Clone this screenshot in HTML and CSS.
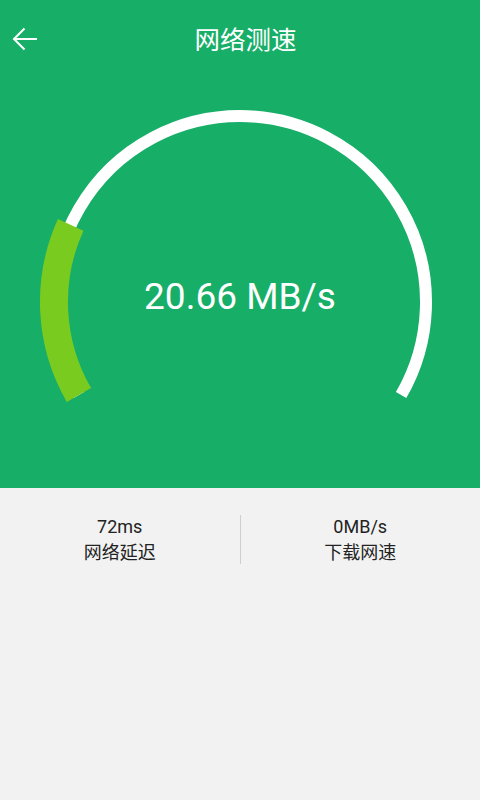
FILE: index.html
```html
<!DOCTYPE html>
<html lang="zh">
<head>
<meta charset="utf-8">
<link rel="stylesheet" href="styles.css">
</head>
<body>
<div class="app">
  <section class="top">
    <header class="bar">
      <svg class="back" width="26" height="26" viewBox="0 0 26 26">
        <path d="M25 13H2M12.5 2.5L2 13l10.5 10.5" fill="none" stroke="#fff" stroke-width="2"/>
      </svg>
      <h1 class="title">网络测速</h1>
    </header>
    <div class="gauge">
      <svg class="dial" width="480" height="408" viewBox="0 80 480 408">
        <path d="M78.9 395 A186 186 0 1 1 401.1 395" fill="none" stroke="#fff" stroke-width="12"/>
        <path d="M78.9 395 A186 186 0 0 1 70.7 224.9" fill="none" stroke="#7acb1f" stroke-width="28"/>
      </svg>
      <div class="speed">20.66 MB/s</div>
    </div>
  </section>
  <section class="stats">
    <div class="stat">
      <div class="val">72ms</div>
      <div class="lbl">网络延迟</div>
    </div>
    <div class="divider"></div>
    <div class="stat">
      <div class="val">0MB/s</div>
      <div class="lbl">下载网速</div>
    </div>
  </section>
</div>
</body>
</html>
```
FILE: styles.css
```css
html, body {
  margin: 0;
  padding: 0;
}
body {
  width: 480px;
  height: 800px;
  background: #f2f2f2;
  font-family: Roboto, "Noto Sans CJK SC", sans-serif;
  overflow: hidden;
}
.app {
  display: flex;
  flex-direction: column;
  height: 800px;
}
.top {
  background: #17ae68;
  height: 488px;
  display: flex;
  flex-direction: column;
}
.bar {
  height: 80px;
  display: grid;
  grid-template-columns: 1fr;
  align-items: center;
}
.back {
  grid-area: 1 / 1;
  margin-left: 12px;
  margin-top: -3px;
}
.title {
  grid-area: 1 / 1;
  margin: -5px 0 0 0;
  padding-left: 11px;
  text-align: center;
  color: #fff;
  font-weight: normal;
  font-size: 25.5px;
  font-family: "Noto Sans CJK SC", sans-serif;
}
.gauge {
  display: grid;
  height: 408px;
}
.dial {
  grid-area: 1 / 1;
  display: block;
}
.speed {
  grid-area: 1 / 1;
  align-self: start;
  margin-top: 197px;
  height: 40px;
  line-height: 40px;
  text-align: center;
  color: #fff;
  font-size: 37px;
}
.stats {
  display: flex;
  align-items: center;
  padding-top: 26px;
}
.stat {
  flex: 1;
  text-align: center;
  color: #222;
  font-size: 18px;
  line-height: 25px;
}
.lbl {
  font-family: "Noto Sans CJK SC", sans-serif;
}
.divider {
  width: 1px;
  height: 49px;
  background: #cfcfcf;
}
```
